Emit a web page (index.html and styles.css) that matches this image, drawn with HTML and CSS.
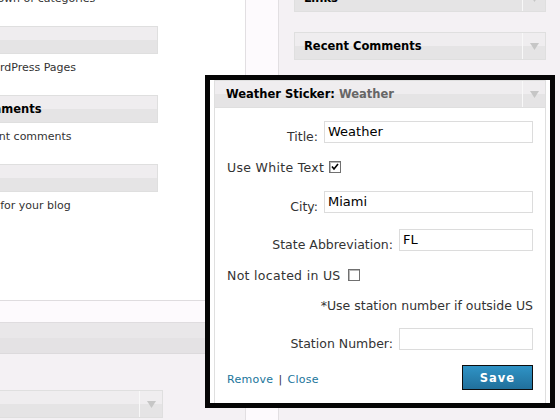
FILE: index.html
```html
<!DOCTYPE html>
<html>
<head>
<meta charset="utf-8">
<title>Widgets</title>
<link rel="stylesheet" href="styles.css">
</head>
<body>
<div class="page">
  <div class="col-left">
    <div class="avail">
      <ul class="wlist">
        <li><div class="lh">Categories</div><p>A list or dropdown of categories</p></li>
        <li><div class="lh">Pages</div><p>Your blog's WordPress Pages</p></li>
        <li><div class="lh">Recent Comments</div><p>The most recent comments</p></li>
        <li><div class="lh">Search</div><p>A search form for your blog</p></li>
      </ul>
    </div>
    <div class="band-pink"></div>
    <div class="band-head"></div>
    <div class="lower">
      <div class="widget w-low">
        <div class="wh"><span class="wt">Meta</span><span class="tg"><svg width="9" height="7" viewBox="0 0 9 7"><polygon points="0,0 9,0 4.5,7" fill="#c6c6c6"/></svg></span></div>
      </div>
    </div>
  </div>
  <div class="col-mid"></div>
  <div class="col-right">
    <div class="widget">
      <div class="wh"><span class="wt">Links</span><span class="tg"><svg width="9" height="7" viewBox="0 0 9 7"><polygon points="0,0 9,0 4.5,7" fill="#c6c6c6"/></svg></span></div>
    </div>
    <div class="widget">
      <div class="wh"><span class="wt">Recent Comments</span><span class="tg"><svg width="9" height="7" viewBox="0 0 9 7"><polygon points="0,0 9,0 4.5,7" fill="#c6c6c6"/></svg></span></div>
    </div>
  </div>
</div>

<div class="dragging">
  <div class="dw">
    <div class="wh"><span class="wt wt-drag">Weather Sticker:<span class="sub"> Weather</span></span><span class="tg"><svg width="9" height="7" viewBox="0 0 9 7"><polygon points="0,0 9,0 4.5,7" fill="#c6c6c6"/></svg></span></div>
    <div class="wc">
      <div class="row r-title"><label>Title:</label><input class="inp wide" type="text" value="Weather"></div>
      <div class="row-check r-white"><span class="ct">Use White Text</span><span class="cb cb1"><svg width="8" height="8" viewBox="0 0 8 8"><polyline points="1,3.5 3,6 7,1" fill="none" stroke="#000" stroke-width="1.6"/></svg></span></div>
      <div class="row r-city"><label>City:</label><input class="inp wide" type="text" value="Miami"></div>
      <div class="row r-state"><label>State Abbreviation:</label><input class="inp narrow" type="text" value="FL"></div>
      <div class="row-check r-notus"><span class="ct">Not located in US</span><span class="cb cb2"></span></div>
      <div class="note">*Use station number if outside US</div>
      <div class="row r-station"><label>Station Number:</label><input class="inp narrow" type="text" value=""></div>
      <div class="foot">
        <div class="links"><a href="#">Remove</a><span class="sep">|</span><a href="#">Close</a></div>
        <button class="save" type="button">Save</button>
      </div>
    </div>
  </div>
</div>
</body>
</html>
```
FILE: styles.css
```css
html, body {
  margin: 0;
  padding: 0;
}
body {
  width: 560px;
  height: 420px;
  overflow: hidden;
  position: relative;
  background: #f4f1f4;
  font-family: "DejaVu Sans", Verdana, sans-serif;
  color: #333;
}
.page {
  display: grid;
  grid-template-columns: 245px 34px 1fr;
  height: 420px;
  overflow: hidden;
}

/* left column */
.col-left {
  display: flex;
  flex-direction: column;
  min-width: 0;
}
.avail {
  height: 300px;
  background: #fff;
  border-bottom: 1px solid #dfdcdf;
  overflow: hidden;
}
.wlist {
  list-style: none;
  margin: -43px 0 0 -90px;
  padding: 0;
  width: 248px;
}
.lh {
  height: 28px;
  box-sizing: border-box;
  border: 1px solid #dfdfdf;
  background: linear-gradient(#efedef 0, #efedef 50%, #e5e4e5 50%, #e5e4e5 100%);
  padding-left: 13px;
  font-size: 11.5px;
  font-weight: bold;
  line-height: 26px;
  color: #000;
  white-space: nowrap;
}
.wlist p {
  margin: 7px 0 20px 10px;
  font-size: 11px;
  line-height: 14px;
  color: #333;
  white-space: nowrap;
}
.band-pink {
  height: 21px;
  background: #fdfafd;
  border-bottom: 1px solid #dfdcdf;
}
.band-head {
  height: 30px;
  background: linear-gradient(#e9e7e9 0, #e9e7e9 50%, #e4e2e4 50%, #e4e2e4 100%);
  border-bottom: 1px solid #dcdadc;
}
.lower {
  flex: 1;
  background: #f4f1f4;
  padding-top: 36px;
  overflow: hidden;
}

/* middle column */
.col-mid {
  box-sizing: border-box;
  border-left: 1px solid #e2dfe2;
  border-right: 1px solid #e2dfe2;
  background: #fdfafd;
}

/* right column */
.col-right {
  padding: 0 0 0 15px;
  margin-top: -16px;
}
.widget {
  width: 252px;
  margin-bottom: 20px;
}
.w-low {
  margin-left: -88px;
  width: 251px;
}
.wh {
  display: flex;
  height: 28px;
  box-sizing: border-box;
  border: 1px solid #dfdfdf;
  background: linear-gradient(#efedef 0, #efedef 50%, #e5e4e5 50%, #e5e4e5 100%);
}
.wt {
  flex: 1;
  padding-left: 9px;
  font-size: 11.5px;
  font-weight: bold;
  line-height: 26px;
  color: #000;
  white-space: nowrap;
  overflow: hidden;
}
.tg {
  width: 22px;
  border-left: 1px solid #f8f8f8;
  display: flex;
  align-items: center;
  justify-content: center;
}
.tg svg {
  display: block;
}

/* dragged widget */
.dragging {
  position: absolute;
  left: 205px;
  top: 75px;
  width: 350px;
  height: 333px;
  box-sizing: border-box;
  border: 5px solid #050505;
  background: #fff;
  padding: 0 4px;
}
.dw {
  height: 100%;
  box-sizing: border-box;
  border-left: 1px solid #dfdfdf;
  border-right: 1px solid #dfdfdf;
}
.dw .wh {
  margin: 0 -1px;
}
.wt-drag {
  padding-left: 11px;
}
.sub {
  color: #666;
}
.wc {
  padding: 13px 12px 0 12px;
  font-size: 12.5px;
  color: #333;
}
.row {
  display: flex;
  justify-content: flex-end;
  align-items: flex-end;
}
.row label {
  line-height: 12px;
  margin-right: 6px;
  white-space: nowrap;
}
.inp {
  height: 22px;
  box-sizing: border-box;
  border: 1px solid #dcdcdc;
  padding: 0 3px 2px;
  margin: 0;
  font-family: "DejaVu Sans", Verdana, sans-serif;
  font-size: 13px;
  color: #000;
  background: #fff;
  outline: none;
}
.inp.wide { width: 209px; }
.inp.narrow { width: 134px; }
.row-check {
  display: flex;
  align-items: center;
  height: 16px;
  white-space: nowrap;
}
.ct {
  letter-spacing: 0.3px;
}
.cb {
  width: 12px;
  height: 12px;
  box-sizing: border-box;
  border: 1px solid #707070;
  box-shadow: inset 1px 1px 0 #b8b8b8;
  background: #fff;
  display: flex;
  align-items: center;
  justify-content: center;
}
.cb svg { display: block; }
.cb1 { margin-left: 5px; }
.cb2 { margin-left: 7px; }
.r-white { margin-top: 16px; }
.r-city { margin-top: 16px; }
.r-state { margin-top: 16px; }
.r-notus { margin-top: 16px; }
.note {
  margin-top: 15px;
  line-height: 16px;
  text-align: right;
}
.r-station { margin-top: 14px; }
.foot {
  margin-top: 15px;
  display: flex;
  justify-content: space-between;
  align-items: center;
}
.links {
  font-size: 11px;
  padding-top: 4px;
  letter-spacing: 0.3px;
}
.links a {
  color: #21759b;
  text-decoration: none;
}
.sep {
  margin: 0 5px;
  color: #333;
}
.save {
  width: 71px;
  height: 25px;
  box-sizing: border-box;
  border: 1px solid #0d0d0d;
  background: linear-gradient(#2f93c6, #21709b);
  color: #fff;
  font-family: "DejaVu Sans", Verdana, sans-serif;
  font-size: 11.5px;
  font-weight: bold;
  letter-spacing: 1px;
  padding: 0;
  margin: 0;
}
```
